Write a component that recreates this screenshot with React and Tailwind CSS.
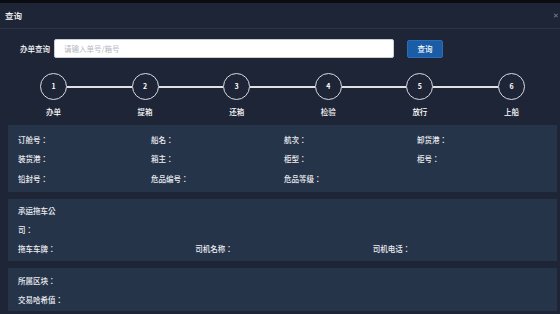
import React from "react";

const steps = ["办单", "提箱", "还箱", "检验", "放行", "上船"];

const Step = ({ n, label }) => (
  <div className="flex flex-col items-center w-[27px] shrink-0">
    <div className="w-[27px] h-[27px] rounded-full border-[1.5px] border-[#d9dce2] flex items-center justify-center text-[7px] font-bold text-white">
      {n}
    </div>
    <span className="mt-[7px] whitespace-nowrap text-[7.5px] leading-[10px] font-medium text-white">
      {label}
    </span>
  </div>
);

const Field = ({ children }) => (
  <div
    className="text-[7.5px] leading-[19.3px] font-medium text-[#eceef2] whitespace-nowrap"
    style={{ fontFamily: '"Noto Sans CJK TC", "Noto Sans CJK SC", sans-serif' }}
  >
    {children}
  </div>
);

export default function App() {
  return (
    <div
      className="w-[560px] h-[314px] overflow-hidden bg-[#1e2537] flex flex-col"
      style={{ fontFamily: '"Noto Sans CJK SC", "Noto Sans", sans-serif' }}
    >
      <div className="h-[3px] bg-[#0a0c10] shrink-0" />
      {/* header */}
      <div className="h-[26px] shrink-0 flex items-center justify-between pl-[5px] pr-[1px] border-b border-[#2b3346]">
        <span className="text-[8.5px] font-medium text-white">查询</span>
        <span className="text-[7px] text-[#7d8594] leading-none">✕</span>
      </div>

      {/* search */}
      <div className="flex items-center mt-[10px] pl-[20px]">
        <span className="text-[7.5px] font-medium text-white w-[29px] whitespace-nowrap">办单查询</span>
        <div className="ml-[5px] w-[340px] h-[19px] bg-white rounded-[2px] border border-[#c9cdd4] flex items-center pl-[9px]">
          <span className="text-[7.5px] text-[#b4b8c0]">请输入单号/箱号</span>
        </div>
        <button
          type="button"
          className="ml-[13px] w-[36px] h-[18px] bg-[#1b5ca6] border border-[#2b6cb4] rounded-[2px] text-[7.5px] font-medium text-white flex items-center justify-center"
        >
          查询
        </button>
      </div>

      {/* steps */}
      <div className="flex items-start mt-[15px] pl-[40px] pr-[35px]">
        {steps.map((s, i) => (
          <React.Fragment key={s}>
            <Step n={i + 1} label={s} />
            {i < steps.length - 1 && (
              <div className="flex-1 h-[2px] bg-[#dfe1e5] mt-[12.5px]" />
            )}
          </React.Fragment>
        ))}
      </div>

      {/* panel 1 */}
      <div className="mt-[8px] ml-[8px] mr-[3px] bg-[#26344a] pt-[5px] pb-[4px] pl-[10px] pr-[7px] grid grid-cols-4">
        <Field>订舱号：</Field>
        <Field>船名：</Field>
        <Field>航次：</Field>
        <Field>卸货港：</Field>
        <Field>装货港：</Field>
        <Field>箱主：</Field>
        <Field>柜型：</Field>
        <Field>柜号：</Field>
        <Field>铅封号：</Field>
        <Field>危品编号：</Field>
        <Field>危品等级：</Field>
        <Field></Field>
      </div>

      {/* panel 2 */}
      <div className="mt-[7px] ml-[8px] mr-[3px] bg-[#26344a] py-[2px] pl-[10px] pr-[7px]">
        <div
          className="w-[40px] text-[7.5px] leading-[19.3px] font-medium text-[#eceef2] break-all"
          style={{ fontFamily: '"Noto Sans CJK TC", "Noto Sans CJK SC", sans-serif' }}
        >
          承运拖车公司：
        </div>
        <div className="grid grid-cols-3">
          <Field>拖车车牌：</Field>
          <Field>司机名称：</Field>
          <Field>司机电话：</Field>
        </div>
      </div>

      {/* panel 3 */}
      <div className="mt-[7px] ml-[8px] mr-[3px] bg-[#26344a] pt-[3px] pl-[10px] pr-[7px] h-[43px] shrink-0">
        <Field>所属区块：</Field>
        <Field>交易哈希值：</Field>
      </div>
    </div>
  );
}
